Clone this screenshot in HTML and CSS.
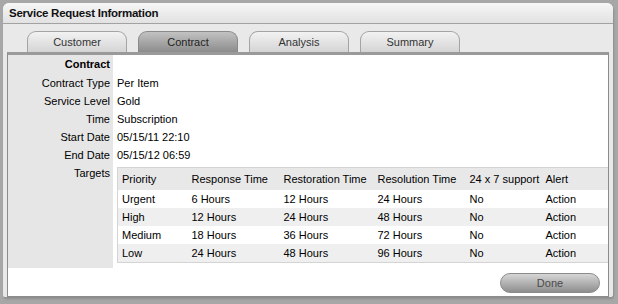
FILE: index.html
```html
<!DOCTYPE html>
<html lang="en">
<head>
    <meta charset="UTF-8">
    <meta name="viewport" content="width=device-width, initial-scale=1.0">
    <title>Service Request Information</title>
    <link rel="stylesheet" href="styles.css">
</head>
<body>

    <div class="window">
        <div class="title-bar">Service Request Information</div>

        <div class="tabs">
            <div class="tab">Customer</div>
            <div class="tab active">Contract</div>
            <div class="tab">Analysis</div>
            <div class="tab">Summary</div>
        </div>

        <div class="panel">
            <div class="details">
                <div class="label heading">Contract</div>
                <div class="value"></div>

                <div class="label">Contract Type</div>
                <div class="value">Per Item</div>

                <div class="label">Service Level</div>
                <div class="value">Gold</div>

                <div class="label">Time</div>
                <div class="value">Subscription</div>

                <div class="label">Start Date</div>
                <div class="value">05/15/11 22:10</div>

                <div class="label">End Date</div>
                <div class="value">05/15/12 06:59</div>

                <div class="label targets-label">Targets</div>
                <div class="value targets">
                    <table class="targets-table">
                        <colgroup>
                            <col style="width: 70px">
                            <col style="width: 92px">
                            <col style="width: 94px">
                            <col style="width: 92px">
                            <col style="width: 76px">
                            <col>
                        </colgroup>
                        <thead>
                            <tr>
                                <th>Priority</th>
                                <th>Response Time</th>
                                <th>Restoration Time</th>
                                <th>Resolution Time</th>
                                <th>24 x 7 support</th>
                                <th>Alert</th>
                            </tr>
                        </thead>
                        <tbody>
                            <tr>
                                <td>Urgent</td>
                                <td>6 Hours</td>
                                <td>12 Hours</td>
                                <td>24 Hours</td>
                                <td>No</td>
                                <td>Action</td>
                            </tr>
                            <tr>
                                <td>High</td>
                                <td>12 Hours</td>
                                <td>24 Hours</td>
                                <td>48 Hours</td>
                                <td>No</td>
                                <td>Action</td>
                            </tr>
                            <tr>
                                <td>Medium</td>
                                <td>18 Hours</td>
                                <td>36 Hours</td>
                                <td>72 Hours</td>
                                <td>No</td>
                                <td>Action</td>
                            </tr>
                            <tr>
                                <td>Low</td>
                                <td>24 Hours</td>
                                <td>48 Hours</td>
                                <td>96 Hours</td>
                                <td>No</td>
                                <td>Action</td>
                            </tr>
                        </tbody>
                    </table>
                </div>
            </div>

            <div class="actions">
                <button class="done-btn">Done</button>
            </div>
        </div>
    </div>

</body>
</html>
```

FILE: styles.css
```css
body {
    font-family: "Liberation Sans", Arial, sans-serif;
    font-size: 11px;
    background-color: #a7a7a7;
    margin: 0;
    height: 304px;
    overflow: hidden;
}

.window {
    margin: 3px 5px 0 3px;
    height: 294px;
    background-color: #e9e9e9;
    border-radius: 6px 6px 2px 2px;
    display: flex;
    flex-direction: column;
    box-shadow: 1px 2px 2px rgba(0, 0, 0, 0.15);
}

.title-bar {
    height: 20px;
    line-height: 21px;
    padding-left: 6px;
    font-weight: bold;
    font-size: 11.5px;
    letter-spacing: -0.25px;
    color: #111;
    background: linear-gradient(#f6f6f6, #e2e2e2);
    border-bottom: 1px solid #a2a2a2;
    border-radius: 6px 6px 0 0;
}

/* tab strip */
.tabs {
    display: flex;
    gap: 11px;
    padding: 7px 0 0 24px;
    height: 21px;
}

.tab {
    width: 98px;
    height: 20px;
    line-height: 21px;
    text-align: center;
    color: #333;
    border: 1px solid #a4a4a4;
    border-bottom: none;
    border-radius: 9px 9px 0 0;
    background: linear-gradient(#f2f2f2, #d4d4d4);
}

.tab.active {
    background: linear-gradient(#c2c2c2, #8c8c8c);
    border-color: #8a8a8a;
    color: #222;
}

/* content panel */
.panel {
    margin: 0 4px;
    flex: 1;
    background-color: white;
    border: 1px solid #8c8c8c;
    border-top: 3px solid #9a9a9a;
    display: flex;
    flex-direction: column;
}

.details {
    display: grid;
    grid-template-columns: 105px 1fr;
}

.label {
    background-color: #e6e6e6;
    text-align: right;
    padding-right: 3px;
    height: 18px;
    line-height: 18px;
}

.label.heading {
    font-weight: bold;
    height: 19px;
    line-height: 19px;
}

.value {
    padding-left: 4px;
    height: 18px;
    line-height: 18px;
}

.targets-label {
    height: 104px;
}

.value.targets {
    height: auto;
    padding: 3px 0 6px 4px;
}

.targets-table {
    width: 100%;
    border-collapse: collapse;
    table-layout: fixed;
    border: 1px solid #d4d4d4;
    border-right: none;
}

.targets-table th,
.targets-table td {
    text-align: left;
    font-weight: normal;
    padding: 0 0 0 4px;
    white-space: nowrap;
    height: 18px;
}

.targets-table th {
    height: 22px;
    background-color: #e8e8e8;
}

.targets-table tbody tr:nth-child(even) {
    background-color: #efefef;
}

.actions {
    display: flex;
    justify-content: flex-end;
    padding: 4px 8px 0 0;
}

.done-btn {
    width: 100px;
    height: 20px;
    border-radius: 10px;
    border: 1px solid #8a8a8a;
    background: linear-gradient(#d6d6d6, #8e8e8e);
    color: #4a4a4a;
    font-family: "Liberation Sans", Arial, sans-serif;
    font-size: 11px;
    padding: 0;
    cursor: pointer;
}
```
